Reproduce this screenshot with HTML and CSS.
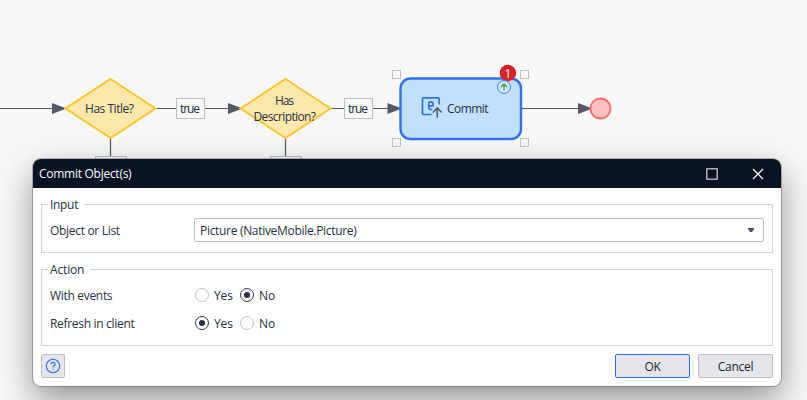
FILE: index.html
```html
<!DOCTYPE html>
<html lang="en">
<head>
<meta charset="utf-8">
<title>Commit Object(s)</title>
<link rel="stylesheet" href="styles.css">
</head>
<body>
<main class="workspace">
  <svg class="canvas" width="807" height="400" viewBox="0 0 807 400">
    <g class="flow">
      <path d="M0 108.5H54M156 108.5H176M205 108.5H230M331 108.5H344M373 108.5H390M522 108.5H580M110.500 138V156M285.500 138V156"/>
    </g>
    <g class="arrow">
      <path d="M52 103L66.500 108.500L52 114Z"/>
      <path d="M228 103L242.500 108.500L228 114Z"/>
      <path d="M387.500 103L402 108.500L387.500 114Z"/>
      <path d="M578 103L592.500 108.500L578 114Z"/>
    </g>
    <g class="decision">
      <path d="M110.500 79L155.500 108.500L110.500 138L65.500 108.500Z"/>
      <path d="M285.500 79L330.500 108.500L285.500 138L240.500 108.500Z"/>
    </g>
    <g class="tag">
      <rect x="176.500" y="98.500" width="28" height="20"/>
      <rect x="344.500" y="98.500" width="28" height="20"/>
      <rect x="95.500" y="156.500" width="31" height="20"/>
      <rect x="270.500" y="156.500" width="31" height="20"/>
    </g>
    <rect class="activity" x="400.500" y="78.500" width="120.500" height="60.500" rx="10"/>
    <g class="handle">
      <rect x="392.500" y="70.500" width="8" height="8"/>
      <rect x="520.500" y="70.500" width="8" height="8"/>
      <rect x="392.500" y="138.500" width="8" height="8"/>
      <rect x="520.500" y="138.500" width="8" height="8"/>
    </g>
    <path class="entity" d="M431.500 114.500H423.500Q422.500 114.500 422.500 113.500V98.800Q422.500 97.800 423.500 97.800H438.200Q439.200 97.800 439.200 98.800V104.500M428.800 105.800H433V104Q433 101.800 430.800 101.800T428.700 104V107.300Q428.700 109.500 430.800 109.500H432.200"/>
    <path class="commit-arrow" d="M437.300 117.700V108M432.900 112.500L437.300 108L441.700 112.500"/>
    <circle class="badge" cx="507.900" cy="73" r="8.300"/>
    <circle class="refresh" cx="504" cy="87" r="6.500"/>
    <path class="refresh-arrow" d="M504 90.500V84M501 87L504 84L507 87"/>
    <circle class="end" cx="600.500" cy="108.500" r="10"/>
    <g class="label">
      <text x="85" y="112.500" textLength="49">Has Title?</text>
      <text x="180" y="112.500" textLength="20">true</text>
      <text x="275" y="104.500" textLength="19">Has</text>
      <text x="253.500" y="120.500" textLength="62.500">Description?</text>
      <text x="348" y="112.500" textLength="20">true</text>
      <text x="447" y="112.500" textLength="41.500">Commit</text>
      <text class="badge-text" x="504.500" y="77.500">1</text>
    </g>
  </svg>

  <section class="dialog">
    <header class="titlebar">
      <h1 class="title">Commit Object(s)</h1>
      <svg class="window-icon" width="12" height="12" viewBox="0 0 12 12"><rect x=".75" y=".75" width="10.500" height="10.500" rx=".5" fill="none" stroke="#b0b3b9" stroke-width="1.500"/></svg>
      <svg class="window-icon" width="12" height="12" viewBox="0 0 12 12"><path d="M1 1L11 11M11 1L1 11" stroke="#fff" stroke-width="1.200"/></svg>
    </header>
    <div class="content">
      <fieldset class="group input-group">
        <legend class="legend">Input</legend>
        <div class="row">
          <span class="name">Object or List</span>
          <div class="select"><span>Picture (NativeMobile.Picture)</span><svg width="6" height="4" viewBox="0 0 6 4"><path d="M0 0H6V1L4 4H2L0 1Z" fill="#4b5160"/></svg></div>
        </div>
      </fieldset>
      <fieldset class="group action-group">
        <legend class="legend">Action</legend>
        <div class="row">
          <span class="name">With events</span>
          <span class="radio"></span><span class="option yes">Yes</span>
          <span class="radio checked"></span><span class="option">No</span>
        </div>
        <div class="row">
          <span class="name">Refresh in client</span>
          <span class="radio checked"></span><span class="option yes">Yes</span>
          <span class="radio"></span><span class="option">No</span>
        </div>
      </fieldset>
      <footer class="footer">
        <button class="button help" aria-label="Help"><svg width="16" height="16" viewBox="0 0 16 16" fill="none" stroke="#2c6cf6" stroke-width="1.100"><circle cx="8" cy="8" r="6.700"/><path d="M5.900 6.300Q5.900 4.400 8 4.400T10.100 6.200Q10.100 7.200 9 7.800Q8 8.400 8 9.500M8 10.800V12"/></svg></button>
        <button class="button ok">OK</button>
        <button class="button cancel">Cancel</button>
      </footer>
    </div>
  </section>
</main>
</body>
</html>
```
FILE: styles.css
```css
* { box-sizing: border-box; }
body {
  margin: 0;
  background: #f7f7f7;
  color: #272f40;
  font: 12px/17px "Open Sans", "Noto Sans", sans-serif;
}
.workspace {
  position: relative;
  width: 807px;
  height: 400px;
  overflow: hidden;
}
.canvas { display: block; }
.flow { stroke: #505663; stroke-width: 1.2; }
.arrow { fill: #535966; }
.decision { fill: #fde9ac; stroke: #fdc534; stroke-width: 2; }
.tag { fill: #f8f8f8; stroke: #babdc3; }
.handle { fill: none; stroke: #bfc0c4; }
.activity { fill: #c2e0ff; stroke: #2b74f6; stroke-width: 2.4; }
.entity { fill: none; stroke: #2c70f5; stroke-width: 1.7; }
.commit-arrow { fill: none; stroke: #525b6b; stroke-width: 1.6; }
.badge { fill: #d62329; }
.refresh { fill: #d0e5fc; stroke: #3b7cf5; }
.refresh-arrow { fill: none; stroke: #2c9d40; stroke-width: 1.2; }
.end { fill: #fdc1c1; stroke: #fb7074; stroke-width: 1.8; }
.label { fill: #272f40; font-size: 12px; }
.badge-text { fill: #fff; }
.dialog {
  position: absolute;
  left: 33px;
  top: 159px;
  width: 748px;
  height: 227px;
  overflow: hidden;
  border-radius: 8px;
  background: #fff;
  box-shadow: 0 0 0 1px rgba(0, 0, 0, .25), 0 14px 34px rgba(0, 0, 0, .4);
}
.titlebar {
  display: flex;
  align-items: center;
  gap: 34px;
  height: 29px;
  padding: 0 17px 0 6px;
  background: #081222;
  color: #fff;
}
.title {
  flex: 1;
  margin: 0;
  font-size: 12px;
  font-weight: 400;
  letter-spacing: -.27px;
}
.content { padding: 8px; letter-spacing: -.31px; }
.group {
  min-width: 0;
  margin: 0;
  border: 1px solid #d4d5d8;
}
.input-group { height: 57px; padding: 5px 8px 10px 6px; }
.action-group { height: 85px; margin-top: 8px; padding: 3px 8px 8px 6px; }
.legend {
  height: 17px;
  padding: 0 6px 0 2px;
}
.action-group .legend { letter-spacing: -.15px; }
.row { display: flex; align-items: center; height: 28px; }
.input-group .row { height: 24px; }
.name { flex: none; width: 146px; padding-left: 2px; }
.select {
  display: flex;
  align-items: center;
  justify-content: space-between;
  flex: 1;
  height: 24px;
  padding: 0 9px 0 5px;
  border: 1px solid #bbbec5;
  border-radius: 2px;
}
.radio {
  display: flex;
  align-items: center;
  justify-content: center;
  width: 14px;
  height: 14px;
  margin-left: 1px;
  border: 1px solid #c2c4ca;
  border-radius: 50%;
}
.radio.checked { border-color: #343b4b; }
.radio.checked::after {
  content: "";
  width: 6px;
  height: 6px;
  border-radius: 50%;
  background: #272f40;
}
.option { margin-left: 5px; letter-spacing: -.1px; }
.yes { width: 25px; }
.footer { display: flex; gap: 8px; margin-top: 8px; }
.button {
  display: flex;
  align-items: center;
  justify-content: center;
  width: 75px;
  height: 24px;
  padding: 0;
  border: 1px solid #bdbec4;
  border-radius: 2px;
  background: #e6e6ea;
  color: #141e30;
  font: inherit;
  letter-spacing: -.25px;
}
.help { width: 24px; margin-right: auto; }
.ok { border-color: #2c6cf6; }
```
